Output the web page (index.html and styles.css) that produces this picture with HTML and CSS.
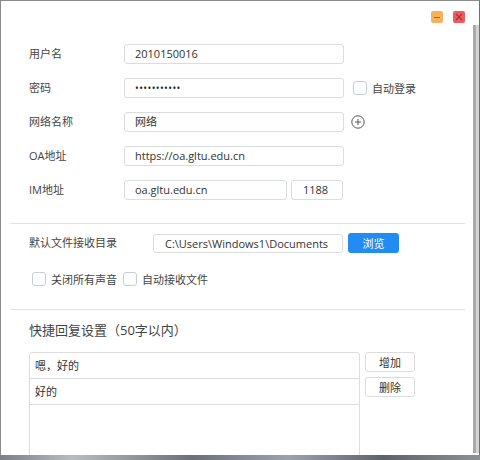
FILE: index.html
```html
<!DOCTYPE html>
<html lang="zh-CN">

<head>
  <meta charset="UTF-8">
  <meta name="viewport" content="width=device-width, initial-scale=1.0">
  <title>系统设置</title>
  <link rel="stylesheet" href="styles.css">
</head>

<body>
  <div class="window">
    <div class="panel">
      <div class="titlebar">
        <span class="win-btn win-min"></span>
        <span class="win-btn win-close">
          <svg width="8" height="8" viewBox="0 0 8 8"><path d="M1 1L7 7M7 1L1 7" stroke="#a8343a" stroke-width="1.2" /></svg>
        </span>
      </div>

      <!-- 账号 / 服务器 -->
      <div class="form">
        <div class="row">
          <span class="label">用户名</span>
          <div class="field">2010150016</div>
        </div>
        <div class="row">
          <span class="label">密码</span>
          <div class="field pwd">•••••••••••</div>
          <span class="check ml9"></span>
          <span class="check-text">自动登录</span>
        </div>
        <div class="row">
          <span class="label">网络名称</span>
          <div class="field">网络</div>
          <svg class="plus" width="14" height="14" viewBox="0 0 14 14">
            <circle cx="7" cy="7" r="6.2" fill="none" stroke="#555" stroke-width="1" />
            <path d="M7 4V10M4 7H10" stroke="#555" stroke-width="1" />
          </svg>
        </div>
        <div class="row">
          <span class="label">OA地址</span>
          <div class="field">https://oa.gltu.edu.cn</div>
        </div>
        <div class="row">
          <span class="label">IM地址</span>
          <div class="field short">oa.gltu.edu.cn</div>
          <div class="field port">1188</div>
        </div>
      </div>

      <div class="sep"></div>

      <!-- 文件 / 声音 -->
      <div class="files">
        <div class="dir-row">
          <span class="label wide">默认文件接收目录</span>
          <div class="field dir">C:\Users\Windows1\Documents</div>
          <button class="btn-blue">浏览</button>
        </div>
        <div class="check-row">
          <span class="check"></span>
          <span class="check-text">关闭所有声音</span>
          <span class="check"></span>
          <span class="check-text">自动接收文件</span>
        </div>
      </div>

      <div class="sep sep-low"></div>

      <!-- 快捷回复 -->
      <div class="reply">
        <div class="reply-title">快捷回复设置（50字以内）</div>
        <div class="reply-body">
          <div class="reply-list">
            <div class="reply-item">嗯，好的</div>
            <div class="reply-item">好的</div>
          </div>
          <div class="reply-btns">
            <button class="btn-plain">增加</button>
            <button class="btn-plain">删除</button>
          </div>
        </div>
      </div>
    </div>
    <div class="scrollbar"><div class="thumb"></div></div>
  </div>
  <div class="taskbar"></div>
</body>

</html>
```

FILE: styles.css
```css
html,
body {
  margin: 0;
  padding: 0;
  height: 100%;
  overflow: hidden;
  font-family: "Open Sans", "Noto Sans CJK SC", sans-serif;
  font-size: 11px;
  color: #333;
  background: #fff;
}

.window {
  display: flex;
  height: 455px;
  box-sizing: border-box;
  border-top: 1px solid #8c8c8c;
  border-left: 1px solid #8c8c8c;
  border-right: 1px solid #6f6f6f;
  background: #fff;
}

.panel {
  flex: 1;
  overflow: hidden;
}

.scrollbar {
  width: 6px;
  padding-top: 24px;
}

.thumb {
  height: 428px;
  background: #d4d4d4;
  border-left: 3px solid #a9a9a9;
}

.taskbar {
  height: 5px;
  background: linear-gradient(90deg, #7a7f88, #b8bcc2 15%, #6c7078 40%, #9aa3ad 60%, #5e636b 80%, #8d9197);
}

/* タイトルバーのボタン */
.titlebar {
  display: flex;
  justify-content: flex-end;
  gap: 10px;
  height: 36px;
  box-sizing: border-box;
  padding: 10px 8px 0 0;
}

.win-btn {
  width: 12px;
  height: 12px;
  border-radius: 2px;
  display: flex;
  align-items: center;
  justify-content: center;
}

.win-min {
  background: #f6b25a;
}

.win-min::after {
  content: "";
  width: 6px;
  height: 1px;
  background: #9c6a2c;
}

.win-close {
  background: #ef5a5e;
}

.form {
  padding-left: 28px;
}

.row {
  display: flex;
  align-items: center;
  height: 34px;
}

.label {
  width: 95px;
  color: #444;
  line-height: 16px;
}

.label.wide {
  width: 124px;
}

.field {
  width: 220px;
  height: 20px;
  box-sizing: border-box;
  border: 1px solid #d9dce1;
  border-radius: 3px;
  padding-left: 10px;
  line-height: 18px;
  color: #333;
  white-space: nowrap;
  overflow: hidden;
}

.field.pwd {
  font-size: 10px;
  letter-spacing: 0.4px;
  color: #222;
}

.field.short {
  width: 163px;
}

.field.port {
  width: 52px;
  margin-left: 4px;
  padding-left: 11px;
}

.field.dir {
  width: 190px;
  height: 19px;
  padding-left: 11px;
  line-height: 17px;
}

.check {
  width: 14px;
  height: 14px;
  box-sizing: border-box;
  border: 1px solid #c7ccd6;
  border-radius: 3px;
  background: #fff;
}

.ml9 {
  margin-left: 9px;
}

.check-text {
  margin-left: 5px;
  margin-right: 6px;
  color: #444;
}

.plus {
  margin-left: 7px;
}

.sep {
  height: 1px;
  background: #e3e3e3;
  margin: 16px 8px 0 9px;
}

.sep-low {
  margin-top: 23px;
}

.files {
  padding: 9px 0 0 28px;
}

.dir-row {
  display: flex;
  align-items: center;
  height: 20px;
}

.btn-blue {
  margin-left: 5px;
  width: 51px;
  height: 20px;
  border: none;
  border-radius: 3px;
  background: #238cf3;
  color: #fff;
  font-family: inherit;
  font-size: 11px;
  padding: 0;
}

.check-row {
  display: flex;
  align-items: center;
  height: 14px;
  margin: 19px 0 0 3px;
}

.reply {
  padding: 12px 0 0 28px;
}

.reply-title {
  line-height: 16px;
  font-size: 13px;
  color: #444;
}

.reply-body {
  display: flex;
  gap: 5px;
  margin-top: 14px;
}

.reply-list {
  width: 329px;
  height: 140px;
  border: 1px solid #dcdcdc;
  border-radius: 3px 3px 0 0;
}

.reply-item {
  height: 25px;
  line-height: 25px;
  padding-left: 5px;
  border-bottom: 1px solid #dcdcdc;
}

.reply-btns {
  display: flex;
  flex-direction: column;
  gap: 5px;
}

.btn-plain {
  width: 50px;
  height: 20px;
  padding: 0;
  border: 1px solid #dcdcdc;
  border-radius: 3px;
  background: #fff;
  color: #333;
  font-family: inherit;
  font-size: 11px;
}
```
